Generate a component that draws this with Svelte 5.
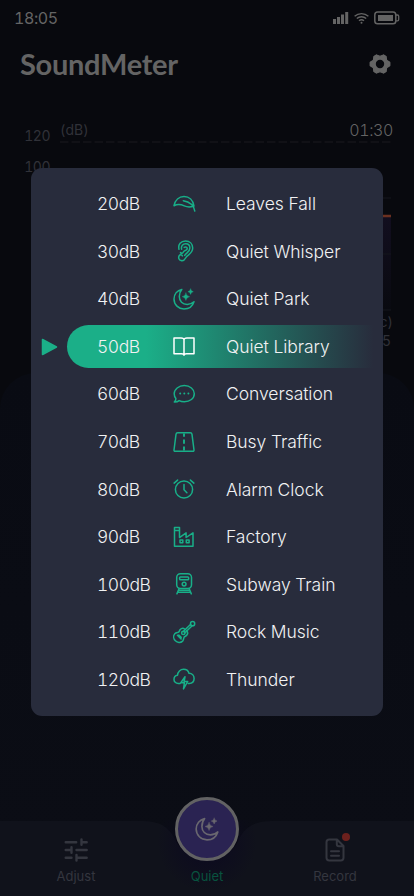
<script lang="ts">
  type Level = {
    db: number;
    label: string;
    icon: string;
  };

  const levels: Level[] = [
    { db: 20, label: 'Leaves Fall', icon: 'leaf' },
    { db: 30, label: 'Quiet Whisper', icon: 'ear' },
    { db: 40, label: 'Quiet Park', icon: 'moon' },
    { db: 50, label: 'Quiet Library', icon: 'book' },
    { db: 60, label: 'Conversation', icon: 'chat' },
    { db: 70, label: 'Busy Traffic', icon: 'road' },
    { db: 80, label: 'Alarm Clock', icon: 'alarm' },
    { db: 90, label: 'Factory', icon: 'factory' },
    { db: 100, label: 'Subway Train', icon: 'train' },
    { db: 110, label: 'Rock Music', icon: 'guitar' },
    { db: 120, label: 'Thunder', icon: 'thunder' }
  ];

  const ticks = [120, 100, 80, 60, 40, 20];

  let selected = $state(50);
</script>

{#snippet moon()}
  <path d="M9.8 2.4C5.2 3.4 2 7.3 2 12.1 2 17.7 6.5 22 12 22c4.700 0 8.600-2.900 10-7.300-2 1.900-4.200 2.700-6.800 2.700-4.700 0-7.900-3.300-7.900-7.800 0-2.900.8-5.300 2.500-7.200z" />
  <path class="solid" d="M13.900 6q.5 3.300 3.700 3.700-3.200.5-3.700 3.700-.5-3.200-3.700-3.700 3.200-.4 3.700-3.700zM18.600 2q.4 2.300 2.700 2.700-2.300.4-2.700 2.700-.4-2.300-2.700-2.700 2.300-.4 2.700-2.700z" />
{/snippet}

<div class="screen">
  <div class="status">
    <span>18:05</span>
    <div class="status-icons">
      <svg width="16" height="12" viewBox="0 0 16 12">
        <path d="M0 7h3v5H0zM4 5h3v7H4zM8 2.500h3V12H8zM12.200 0h3v12h-3z" fill="currentColor" />
      </svg>
      <svg width="15" height="12" viewBox="0 0 15 12">
        <g fill="none" stroke="currentColor" stroke-width="1.300">
          <path d="M.6 4.300a10 10 0 0 1 13.800 0M2.800 6.600a6.900 6.900 0 0 1 9.400 0M5 8.800a3.800 3.800 0 0 1 5 0" />
        </g>
        <circle cx="7.500" cy="10.700" r="1" fill="currentColor" />
      </svg>
      <svg width="26" height="14" viewBox="0 0 26 14">
        <rect x=".8" y="1.100" width="21" height="11.600" rx="2.800" fill="none" stroke="currentColor" stroke-width="1.500" />
        <rect x="4" y="4" width="15" height="6" fill="currentColor" />
        <path d="M22 4h1.500q1.200 0 1.200 1.200v3.400q0 1.200-1.200 1.200H22" fill="none" stroke="currentColor" stroke-width="1.300" />
      </svg>
    </div>
  </div>

  <header>
    <h1>SoundMeter</h1>
    <svg width="22" height="22" viewBox="0 0 22 22" aria-label="Settings">
      <path
        d="M21.200 9.300v3.400L17.600 14.800 17.400 18.600 14.600 20.400 11 18.600 7.400 20.400 4.600 18.600 4.400 14.800.8 12.700V9.300L4.400 7.200 4.600 3.400 7.400 1.600 11 3.400 14.600 1.600 17.400 3.400 17.600 7.200zM11 6.800a4.200 4.200 0 1 0 0 8.400 4.200 4.200 0 0 0 0-8.400z"
        fill="currentColor" fill-rule="evenodd" />
      <path
        d="M20.700 9.300v3.400L17.600 14.800 17 18.600 14.600 20 11 18.600 7.400 20 5 18.600 4.400 14.800 1.300 12.700V9.300L4.400 7.200 5 3.400 7.400 2 11 3.400 14.600 2 17 3.400 17.600 7.200z"
        fill="none" stroke="currentColor" stroke-width="1.200" stroke-linejoin="round" />
    </svg>
  </header>

  <section class="chart">
    <div class="axis">
      {#each ticks as tick}
        <span>{tick}</span>
      {/each}
    </div>
    <div class="plot">
      <div class="plot-head">
        <span class="unit">(dB)</span>
        <span class="time">01:30</span>
      </div>
      <svg width="332" height="172" viewBox="0 0 332 172">
        <defs>
          <linearGradient id="area" x1="0" y1="0" x2="0" y2="1">
            <stop offset="0" stop-color="#120e1f" />
            <stop offset="1" stop-color="#090a10" />
          </linearGradient>
        </defs>
        <path d="M0 76h331v94H0z" fill="url(#area)" />
        <path d="M0 2h331" stroke="#14151a" stroke-width="1.500" stroke-dasharray="8.500 3" />
        <path d="M0 58h331M0 114h331M0 170h331" stroke="#15161d" />
        <path d="M0 76h331" stroke="#6b3020" stroke-width="2.400" />
      </svg>
      <span class="sec">(sec)</span>
      <span class="last">15</span>
    </div>
  </section>

  <main></main>

  <nav>
    <svg class="nav-bg" width="414" height="76" viewBox="0 0 414 76">
      <defs>
        <radialGradient id="glow">
          <stop offset="0" stop-color="#0b0820" />
          <stop offset="1" stop-color="#0b0820" stop-opacity="0" />
        </radialGradient>
      </defs>
      <path d="M0 1h143c17 0 26 6 32 18 12 28 52 28 64 0 6-12 15-18 32-18h143v75H0z" fill="#10121b" />
      <circle cx="207" cy="22" r="50" fill="url(#glow)" />
    </svg>
    <a href="#adjust">
      <svg width="24" height="24" viewBox="0 0 24 24" fill="none" stroke="currentColor" stroke-width="2.400" stroke-linecap="round">
        <path d="M1.700 4.300h10.500M17.500 4.300h5.200M17.500 1.500v5.300M1.700 12h5.500M7.500 9.200v5.600M12.500 12h10.200M1.700 19.700h5.800M12.500 17v5.600M12.500 19.700h10.200" />
      </svg>
      Adjust
    </a>
    <a href="#quiet" class="current">
      <span class="orb">
        <svg class="icon" viewBox="0 0 24 24">{@render moon()}</svg>
      </span>
      Quiet
    </a>
    <a href="#record">
      <span class="record">
        <svg width="24" height="24" viewBox="0 0 24 24" fill="none" stroke="currentColor" stroke-width="2" stroke-linecap="round" stroke-linejoin="round">
          <path d="M14 1.500H6.200q-2.700 0-2.700 2.700v15.600q0 2.700 2.700 2.700h11.600q2.700 0 2.700-2.700V8zM13.800 1.800v4.400q0 2 2 2h4.400M8 13.300h8M8 17.800h8" />
        </svg>
        <i class="dot"></i>
      </span>
      Record
    </a>
  </nav>

  <ul class="levels">
    {#each levels as level}
      <li class:active={level.db === selected}>
        <svg class="pointer" viewBox="0 0 17 18">
          <path d="M1.500 1.500L15.500 9l-14 7.500z" />
        </svg>
        <button onclick={() => (selected = level.db)}>
          <span class="db">{level.db}dB</span>
          <svg class="icon" viewBox="0 0 24 24">
            {#if level.icon === 'leaf'}
              <path d="M2 13.700C3.100 8.200 7 4.500 12 4.500c5.200 0 9.100 3.700 10 9.600M2 13.700c4-1.900 7-1.300 10.300.2 3.200 1.400 6.300 1.400 9.200.1M11.300 8.700c5.800.9 10.300 4 11.500 10.400" />
            {:else if level.icon === 'ear'}
              <path d="M7 10.200C5.800 5.200 9 1.900 13.500 1.900c4.300 0 7.200 3 7.200 7.200 0 5.700-5.200 6.400-7.100 9.900-1 2-2.600 3.100-4.500 2.600C7 21 6 18.700 7.200 16.700c.8-1.300 2.700-1 3.200.2M9.600 10.200C8.800 6.800 11 4.800 13.700 4.800c2.400 0 4.200 1.800 4.200 4.300 0 3.700-3.700 4.600-5.200 7.300M12.200 8.400c2-1.300 3.500.3 2.700 1.900-.7 1.400-2.900 1-3.700 2.900-.5 1.200-1.700 1.400-2.700.4" />
            {:else if level.icon === 'moon'}
              {@render moon()}
            {:else if level.icon === 'book'}
              <path d="M2 4h7q3 0 3 1.800Q12 4 15 4h7v15.700h-7.500q-2.500 0-2.500 1.500 0-1.500-2.500-1.500H2zM12 5.500v15" />
            {:else if level.icon === 'chat'}
              <path d="M12.300 3.600c5.700 0 10 3.600 10 8.200s-4.300 8-10 8c-2 0-3.700-.4-5.200-1.200-1.300 1.200-2.700 1.600-4.800 1.500 1.100-1 1.700-2.200 1.600-3.600-1.100-1.300-1.700-2.900-1.700-4.700 0-4.600 4.500-8.200 10.100-8.200z" />
              <path class="dots" d="M8.200 11.500h.01M12.300 11.500h.01M16.400 11.500h.01" />
            {:else if level.icon === 'road'}
              <path d="M5.700 2.800h12.600q1.500 0 1.700 1.600l2 15.600q.1 1.300-1.200 1.300H3.200Q1.900 21.300 2 20L4 4.400Q4.200 2.800 5.700 2.800z" />
              <path class="thick" d="M12 3.500v3.300M12 9.500v4.300M12 16.500v4" />
            {:else if level.icon === 'alarm'}
              <circle cx="12" cy="12.500" r="8.600" />
              <path d="M12 7.400v5.400l2.900 2.900M2.100 6.100l3.500-3M21.900 6.100l-3.500-3" />
            {:else if level.icon === 'factory'}
              <path d="M2.500 2.600h5v10l6.600-4.700v4.600l6.900-4.700v13.500H2.500zM2.500 5.600h5" />
              <rect x="8" y="14.900" width="2.800" height="2.800" />
              <rect x="14.300" y="14.900" width="2.800" height="2.800" />
            {:else if level.icon === 'train'}
              <rect x="4.700" y="1.800" width="14.800" height="14.700" rx="3.700" />
              <rect x="7.600" y="5" width="9" height="2.700" rx=".8" />
              <circle cx="12.100" cy="12.100" r="1.900" />
              <path d="M7 16.700l-2.100 5.200M17.200 16.700l2.100 5.200M6.500 18.300h11.200M5.800 20.300h12.600" />
            {:else if level.icon === 'guitar'}
              <path d="M13 9.300c-1.500-1.200-3.600-1-4.800.3-.9 1-.7 2.200-2 2.700-1.300.4-2.400.4-3.400 1.500-1.900 2.100-1.300 5.100.6 7s5.100 2.300 7.200.3c1.100-1.100 1-2.200 1.300-3.500.4-1.300 1.700-1.200 2.700-2.200 1.200-1.200 1.200-3.300.1-4.700" />
              <path d="M11.200 11.600L18.700 4.200M12.600 13l7.600-7.300" />
              <circle cx="20.600" cy="3.700" r="2.100" />
              <circle cx="11.300" cy="12.900" r="1.700" />
              <path d="M5.400 15.200l3.700 3.700M6.800 15l2.400 2.400" />
            {:else}
              <path d="M8.200 16.500H6.300C3.700 16.500 2 14.700 2 12.400c0-2.100 1.400-3.800 3.500-4.100.2-3.500 2.900-6 6.100-6 2.800 0 4.700 1.500 5.400 3.900 3 .1 5.100 2.400 5.100 5.200 0 2.900-2 4.900-5 5.100h-1" />
              <path d="M13 9.800l-4.200 6h3.600l-.9 6.100 4.200-7.400h-3.600z" />
            {/if}
          </svg>
          <span class="label">{level.label}</span>
        </button>
      </li>
    {/each}
  </ul>
</div>

<style>
  :global(body) {
    margin: 0;
    background: #08090e;
  }

  .screen {
    position: relative;
    display: flex;
    flex-direction: column;
    width: 414px;
    height: 896px;
    overflow: hidden;
    background: #08090e;
    color: #646464;
    font-family: Inter, 'Liberation Sans', sans-serif;
    font-variant-numeric: tabular-nums;
  }

  .status {
    display: flex;
    justify-content: space-between;
    align-items: center;
    height: 36px;
    padding: 0 14px;
    font-size: 16px;
    letter-spacing: -0.4px;
  }

  .status-icons {
    display: flex;
    align-items: center;
    gap: 5px;
  }

  header {
    display: flex;
    justify-content: space-between;
    align-items: center;
    height: 56px;
    padding: 0 23px 0 20px;
  }

  h1 {
    margin: 0;
    font-family: Lato, sans-serif;
    font-size: 29px;
    font-weight: 700;
    letter-spacing: -0.3px;
    line-height: 56px;
  }

  .chart {
    display: flex;
    gap: 10px;
    height: 253px;
    padding-top: 28px;
  }

  .axis {
    display: flex;
    flex-direction: column;
    width: 50px;
    padding-top: 1px;
    color: #303138;
    font-size: 14px;
    letter-spacing: -0.5px;
    line-height: 30.6px;
    text-align: right;
  }

  .plot {
    display: flex;
    flex-direction: column;
    width: 333px;
  }

  .plot-head {
    display: flex;
    justify-content: space-between;
    height: 20px;
    line-height: 20px;
  }

  .unit,
  .sec,
  .last {
    color: #303138;
    font-size: 14px;
  }

  .time {
    font-size: 16px;
    font-weight: 300;
    letter-spacing: -0.4px;
  }

  .plot svg {
    flex: none;
  }

  .sec,
  .last {
    line-height: 19px;
    text-align: right;
  }

  .last {
    padding-right: 2px;
  }

  main {
    flex: 1;
    border-radius: 36px 36px 0 0;
    background: linear-gradient(#090b13, #0b0d15);
    margin-bottom: -20px;
  }

  nav {
    position: relative;
    display: flex;
    height: 76px;
  }

  .nav-bg {
    position: absolute;
    inset: 0;
  }

  nav a {
    position: relative;
    display: flex;
    flex: 1;
    flex-direction: column;
    align-items: center;
    justify-content: flex-end;
    gap: 6px;
    height: 65px;
    color: #34363f;
    font-size: 13px;
    line-height: 17px;
    text-decoration: none;
  }

  nav a:first-of-type {
    flex: none;
    width: 152px;
  }

  nav a:last-of-type {
    flex: none;
    box-sizing: border-box;
    width: 152px;
    padding-right: 6px;
  }

  nav .current {
    gap: 7px;
    color: #08533f;
  }

  .orb {
    display: flex;
    align-items: center;
    justify-content: center;
    flex: none;
    box-sizing: border-box;
    width: 64px;
    height: 64px;
    border: 3px solid #626263;
    border-radius: 50%;
    background: #2a2352;
    color: #69676f;
  }

  .record {
    position: relative;
    height: 24px;
  }

  .dot {
    position: absolute;
    top: -5px;
    right: -3px;
    width: 8px;
    height: 8px;
    border-radius: 50%;
    background: #6c201d;
  }

  /* level picker, floats above the dimmed meter */
  .levels {
    position: absolute;
    top: 168px;
    left: 31px;
    box-sizing: border-box;
    width: 352px;
    height: 548px;
    margin: 0;
    padding: 12px 0;
    border-radius: 11px;
    background: #282c3c;
    list-style: none;
  }

  li {
    display: flex;
    align-items: center;
    height: 47.55px;
  }

  .pointer {
    width: 17px;
    height: 18px;
    margin: 1px 9px 0 10px;
    visibility: hidden;
    fill: #1baf88;
    stroke: #1baf88;
    stroke-width: 1.5;
    stroke-linejoin: round;
  }

  .active .pointer {
    visibility: visible;
  }

  button {
    display: flex;
    align-items: center;
    flex: 1;
    height: 43px;
    padding: 0 0 0 30px;
    border: 0;
    border-radius: 22px 0 0 22px;
    background: none;
    color: #f1f2f3;
    font-family: inherit;
    font-size: 17.5px;
    font-variant-numeric: inherit;
    font-weight: 300;
    text-align: left;
    cursor: pointer;
  }

  .active button {
    background: linear-gradient(90deg, #1baf88 25%, #282c3c 97%);
  }

  .db {
    width: 75px;
    letter-spacing: -0.5px;
  }

  .icon {
    flex: none;
    width: 24px;
    height: 24px;
    fill: none;
    stroke: currentColor;
    stroke-width: 1.5;
    stroke-linecap: round;
    stroke-linejoin: round;
  }

  .icon .thick {
    stroke-width: 1.9;
    stroke-linecap: butt;
  }

  .icon .dots {
    stroke-width: 2;
  }

  .icon .solid {
    fill: currentColor;
    stroke-width: 0.4;
  }

  .orb .icon {
    width: 26px;
    height: 26px;
  }

  button .icon {
    color: #18af88;
  }

  .active .icon {
    color: #fff;
  }

  .label {
    margin-left: 30px;
    letter-spacing: -0.05px;
  }
</style>
